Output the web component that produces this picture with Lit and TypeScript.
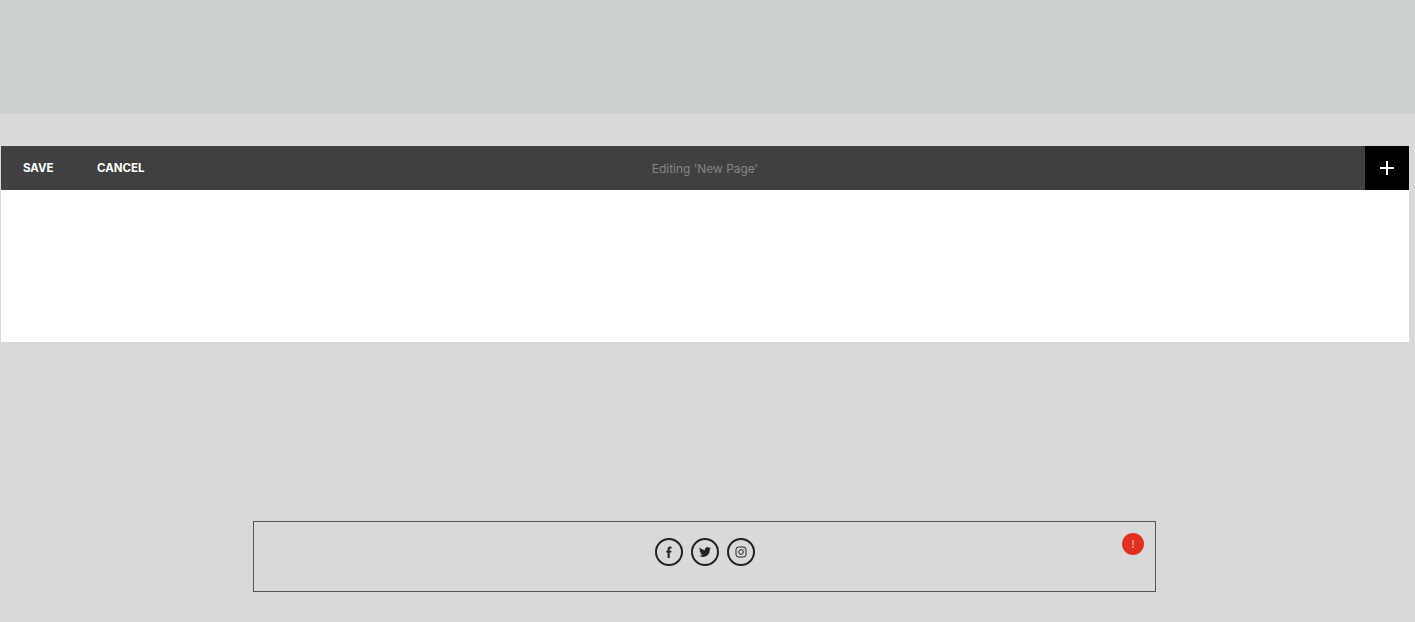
import { LitElement, html, css } from "lit";
import { customElement } from "lit/decorators.js";

@customElement("app-root")
export class AppRoot extends LitElement {
  static styles = css`
    :host { display: block; height: 622px; background: #d9d9d9; overflow: hidden; font-family: Inter, "Liberation Sans", sans-serif; }
    .top { height: 114px; background: #cbcfd0; border-bottom: 1px solid #d0d3d3; box-sizing: border-box; }
    .editor { margin: 32px 6px 0 1px; height: 196px; display: flex; flex-direction: column; background: #fff; }
    .bar { height: 44px; background: #404040; display: flex; align-items: center; position: relative; }
    .btn { color: #fff; font-size: 11.5px; font-weight: 700; letter-spacing: 0; line-height: 44px; }
    .save { margin-left: 22px; width: 74px; }
    .title { position: absolute; left: 0; right: 0; text-align: center; color: #858585; font-size: 12px; letter-spacing: -0.03px; }
    .add { margin-left: auto; width: 44px; height: 44px; background: #000; display: flex; align-items: center; justify-content: center; position: relative; }
    .footer { margin: 179px 0 0 253px; width: 903px; height: 71px; box-sizing: border-box; border: 1px solid #555; position: relative; display: flex; justify-content: center; gap: 8px; padding: 16px 0 0 0; }
    .circle { width: 28px; height: 28px; box-sizing: border-box; border: 2px solid #222; border-radius: 50%; display: flex; align-items: center; justify-content: center; }
    .alert { position: absolute; left: 868px; top: 11px; width: 22px; height: 22px; border-radius: 50%; background: #e03020; display: flex; align-items: center; justify-content: center; }
    svg { display: block; }
  `;

  render() {
    return html`
      <div class="top"></div>
      <div class="editor">
        <div class="bar">
          <span class="btn save">SAVE</span>
          <span class="btn">CANCEL</span>
          <span class="title">Editing 'New Page'</span>
          <span class="add">
            <svg width="14" height="14" viewBox="0 0 14 14"><path d="M7 0v14M0 7h14" stroke="#fff" stroke-width="2" fill="none"/></svg>
          </span>
        </div>
      </div>
      <div class="footer">
        <span class="circle">
          <svg width="12" height="12" viewBox="0 0 12 12"><path fill="#222" d="M4.6 12V6.6H3.2V4.7h1.4V3.3C4.6 1.6 5.5.6 7.1.6c.6 0 1.1 0 1.4.1v1.7h-.9c-.7 0-.9.4-.9.9v1.4h1.8l-.3 1.9H6.7V12z"/></svg>
        </span>
        <span class="circle">
          <svg width="12" height="12" viewBox="0 0 24 24"><path fill="#222" d="M23.95 4.57a10 10 0 0 1-2.82.77 4.96 4.96 0 0 0 2.16-2.72c-.95.55-2 .96-3.13 1.18a4.92 4.92 0 0 0-8.38 4.48C7.69 8.1 4.07 6.13 1.64 3.16a4.82 4.82 0 0 0-.67 2.48c0 1.71.87 3.21 2.19 4.1a4.9 4.9 0 0 1-2.23-.61v.06a4.92 4.92 0 0 0 3.95 4.83 5 5 0 0 1-2.21.08 4.94 4.94 0 0 0 4.6 3.42A9.87 9.87 0 0 1 0 19.54a14 14 0 0 0 7.56 2.21c9.05 0 14-7.5 14-13.98 0-.21 0-.42-.02-.63a9.94 9.94 0 0 0 2.41-2.57z"/></svg>
        </span>
        <span class="circle">
          <svg width="12" height="12" viewBox="0 0 12 12" fill="none" stroke="#222"><rect x="1" y="1" width="10" height="10" rx="2.5" stroke-width="1"/><circle cx="6" cy="6" r="2.3" stroke-width="1"/><circle cx="8.9" cy="3.1" r=".5" fill="#222" stroke="none"/></svg>
        </span>
        <span class="alert">
          <svg width="2" height="8" viewBox="0 0 2 8"><path fill="#f0b5ad" d="M.4 0h1.2v5H.4zM.4 6h1.2v2H.4z"/></svg>
        </span>
      </div>
    `;
  }
}
